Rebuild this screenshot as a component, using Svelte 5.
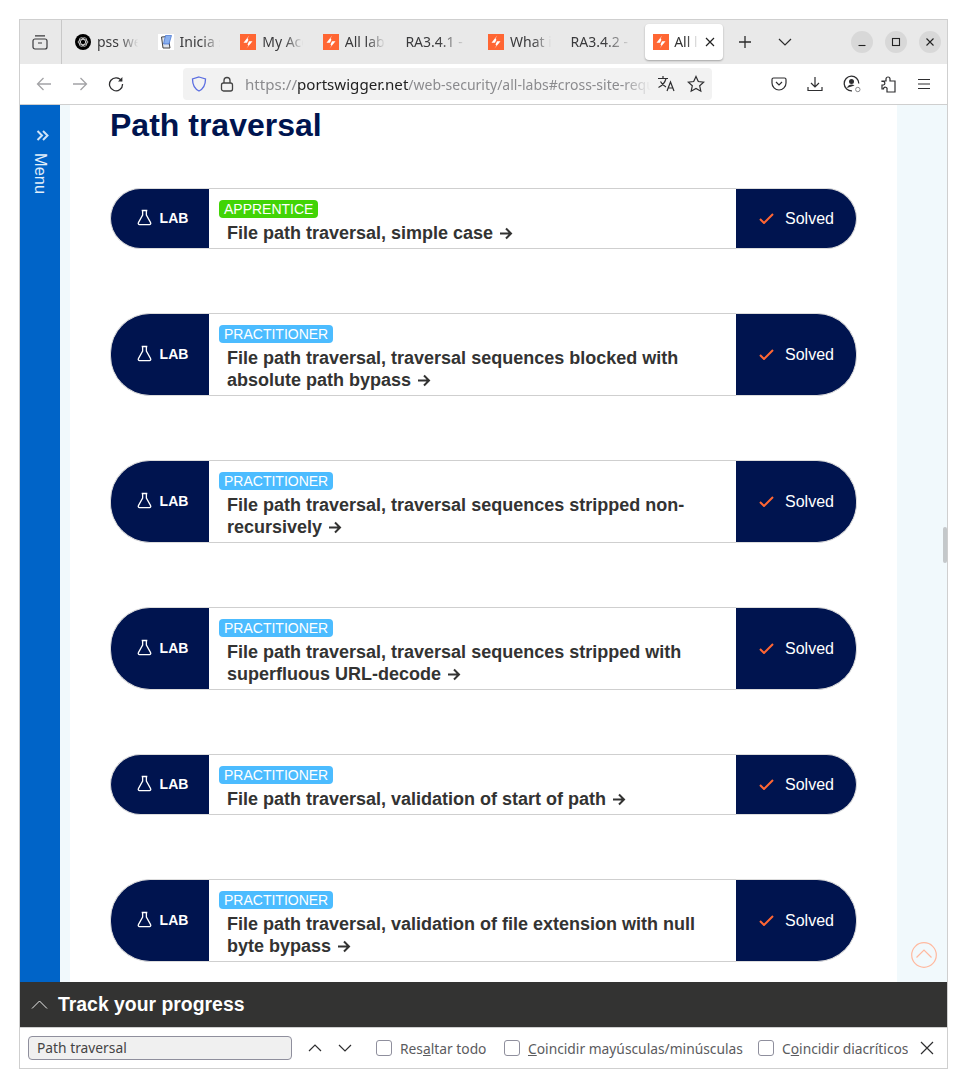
<script>
  const labs = [
    { level: 'APPRENTICE', title: 'File path traversal, simple case' },
    { level: 'PRACTITIONER', title: 'File path traversal, traversal sequences blocked with absolute path bypass' },
    { level: 'PRACTITIONER', title: 'File path traversal, traversal sequences stripped non-recursively' },
    { level: 'PRACTITIONER', title: 'File path traversal, traversal sequences stripped with superfluous URL-decode' },
    { level: 'PRACTITIONER', title: 'File path traversal, validation of start of path' },
    { level: 'PRACTITIONER', title: 'File path traversal, validation of file extension with null byte bypass' }
  ];

  const tabs = [
    { label: 'pss web', icon: 'openai' },
    { label: 'Inicia sesión', icon: 'doc' },
    { label: 'My Account', icon: 'ps' },
    { label: 'All labs', icon: 'ps' },
    { label: 'RA3.4.1 -', icon: '' },
    { label: 'What is', icon: 'ps' },
    { label: 'RA3.4.2 -', icon: '' }
  ];
</script>

{#snippet psIcon()}
  <svg class="fav" viewBox="0 0 16 16">
    <rect width="16" height="16" fill="#ff6633" />
    <path d="M9.200 1.500 3.500 8.800H7L8.400 5.800 7.600 4.600z" fill="#fff" />
    <path d="M12.500 7.200H9L7.500 10.400l.9 1.200-1.900 3z" fill="#fff" />
  </svg>
{/snippet}

<div class="window">
  <header class="tabbar">
    <div class="view-btn">
      <svg width="16" height="16" viewBox="0 0 16 16" fill="none" stroke="#3a3a3c" stroke-width="1.2">
        <rect x="1" y="5" width="14" height="10" rx="2" />
        <path d="M3 1.800h10M6 9h4" />
      </svg>
    </div>
    <div class="tabs">
      {#each tabs as tab}
        <div class="tab">
          {#if tab.icon === 'ps'}
            {@render psIcon()}
          {:else if tab.icon === 'openai'}
            <svg class="fav" viewBox="0 0 16 16">
              <circle cx="8" cy="8" r="8" fill="#000" />
              <g fill="none" stroke="#ddd" stroke-width="0.8">
                <ellipse cx="8" cy="8" rx="4.800" ry="2.500" />
                <ellipse cx="8" cy="8" rx="4.800" ry="2.500" transform="rotate(60 8 8)" />
                <ellipse cx="8" cy="8" rx="4.800" ry="2.500" transform="rotate(120 8 8)" />
              </g>
            </svg>
          {:else if tab.icon === 'doc'}
            <svg class="fav" viewBox="0 0 16 16">
              <rect width="16" height="16" fill="#fff" />
              <path d="M3.500 3 10 2.500 12 14H5z" fill="#dfe3ea" stroke="#444" stroke-width="1" />
              <path d="M7.500 1.500h6L11 10H5.500z" fill="#8ab0ee" stroke="#3f6fd0" stroke-width="0.7" />
            </svg>
          {/if}
          <span class="tab-label">{tab.label}</span>
        </div>
      {/each}
      <div class="tab active">
        {@render psIcon()}
        <span class="tab-label">All labs</span>
        <svg class="tab-close" width="10" height="10" viewBox="0 0 10 10" stroke="#222" stroke-width="1.2">
          <path d="M1 1l8 8M9 1l-8 8" />
        </svg>
      </div>
    </div>
    <svg class="new-tab" width="14" height="14" viewBox="0 0 14 14" stroke="#2b2b2b" stroke-width="1.3">
      <path d="M7 1v12M1 7h12" />
    </svg>
    <svg class="tab-list" width="14" height="8" viewBox="0 0 14 8" fill="none" stroke="#2b2b2b" stroke-width="1.2">
      <path d="M1 1l6 6 6-6" />
    </svg>
    <div class="win-btns">
      <span class="win-btn">
        <svg width="10" height="10" viewBox="0 0 10 10" stroke="#222" stroke-width="1.1"><path d="M1.500 8.500h7" /></svg>
      </span>
      <span class="win-btn">
        <svg width="10" height="10" viewBox="0 0 10 10" fill="none" stroke="#222" stroke-width="1.1"><rect x="1.500" y="1.500" width="7" height="7" /></svg>
      </span>
      <span class="win-btn">
        <svg width="10" height="10" viewBox="0 0 10 10" stroke="#222" stroke-width="1.1"><path d="M1.500 1.500l7 7M8.500 1.500l-7 7" /></svg>
      </span>
    </div>
  </header>

  <nav class="toolbar">
    <svg class="nav-icon" width="16" height="16" viewBox="0 0 16 16" fill="none" stroke="#a3a3a6" stroke-width="1.3">
      <path d="M15 8H1.500M7.500 2 1.500 8l6 6" />
    </svg>
    <svg class="nav-icon" width="16" height="16" viewBox="0 0 16 16" fill="none" stroke="#a3a3a6" stroke-width="1.3">
      <path d="M1 8h13.500M8.500 2l6 6-6 6" />
    </svg>
    <svg class="nav-icon" width="16" height="16" viewBox="0 0 16 16" fill="none" stroke="#2e2e30" stroke-width="1.3">
      <path d="M13.600 5A6.500 6.500 0 1 0 14.500 8" />
      <path d="M14.400 1v4.400H10" fill="#2e2e30" stroke="none" />
    </svg>
    <div class="urlbar">
      <svg width="16" height="16" viewBox="0 0 16 16" fill="none" stroke="#5b6ee1" stroke-width="1.3">
        <path d="M8 1 14.500 3c0 6-1.500 9.500-6.500 12C3 12.500 1.500 9 1.500 3z" />
      </svg>
      <svg class="lock" width="14" height="16" viewBox="0 0 14 16" fill="none" stroke="#444" stroke-width="1.3">
        <rect x="1.500" y="7" width="11" height="8" rx="2" />
        <path d="M4 7V4.500a3 3 0 0 1 6 0V7" />
      </svg>
      <span class="url"><span class="dim">https://</span>portswigger.net<span class="dim tail">/web-security/all-labs#cross-site-request-forgery</span></span>
      <span class="translate">
        <svg width="20" height="18" viewBox="0 0 20 18" fill="none" stroke="#2e2e30" stroke-width="1.200">
          <path d="M1 3.500h10M6 1v2.500M9 3.500c-1 4-3.500 7-7.500 9M3.500 6.500c1.500 3 3.500 4.500 5.500 5.500M10 16l3.500-9 3.500 9M11.300 13h4.500" />
        </svg>
      </span>
      <svg class="star" width="18" height="18" viewBox="0 0 18 18" fill="none" stroke="#2e2e30" stroke-width="1.200">
        <path d="M9 1.500l2.300 5 5.400.6-4 3.700 1.100 5.400L9 13.500l-4.800 2.700 1.100-5.400-4-3.700 5.400-.6z" />
      </svg>
    </div>
    <div class="tools">
      <svg width="16" height="16" viewBox="0 0 16 16" fill="none" stroke="#2e2e30" stroke-width="1.200">
        <path d="M2.500 2h11A1.500 1.500 0 0 1 15 3.500V7a7 7 0 0 1-14 0V3.500A1.500 1.500 0 0 1 2.500 2z" />
        <path d="M5 6l3 3 3-3" />
      </svg>
      <svg width="16" height="16" viewBox="0 0 16 16" fill="none" stroke="#2e2e30" stroke-width="1.200">
        <path d="M8 1v9.500M4 7l4 4 4-4M1 11v3.500h14V11" />
      </svg>
      <svg width="18" height="18" viewBox="0 0 18 18" fill="none" stroke="#2e2e30" stroke-width="1.300">
        <path d="M15.800 8.500A7.300 7.300 0 1 0 9 15.800" />
        <circle cx="8.500" cy="6.500" r="2.500" fill="#2e2e30" stroke="none" />
        <path d="M3.800 13c1-2.500 3-3.500 4.700-3.500 1.200 0 2 .3 3 1" fill="#2e2e30" stroke="none" />
        <circle cx="14.800" cy="14.500" r="2.200" stroke="#8a8a8d" stroke-width="1" />
      </svg>
      <svg width="16" height="18" viewBox="0 0 16 18" fill="none" stroke="#2e2e30" stroke-width="1.200">
        <path d="M1 6h4V4a2 2 0 0 1 4 0v2h5v11H6v-2.500a1.800 1.800 0 0 0-3.500-1V14H1v-4h1.500a1.800 1.800 0 0 0 0-3.500H1z" />
      </svg>
      <svg width="14" height="12" viewBox="0 0 14 12" stroke="#2e2e30" stroke-width="1.200">
        <path d="M1 1.500h12M1 6h12M1 10.500h12" />
      </svg>
    </div>
  </nav>

  <main class="page">
    <aside class="side">
      <svg class="side-chevron" width="13" height="11" viewBox="0 0 13 11" fill="none" stroke="#cfe3f7" stroke-width="2">
        <path d="M1.500 1l4.500 4.500L1.500 10M7 1l4.500 4.500L7 10" />
      </svg>
      <span class="side-label">Menu</span>
    </aside>
    <div class="gutter"></div>
    <section class="content">
      <h1>Path traversal</h1>
      {#each labs as lab}
        <div class="lab">
          <div class="lab-tag">
            <svg width="15" height="17" viewBox="0 0 16 17" fill="none" stroke="#fff" stroke-width="1.400">
              <path d="M5 1h6M6 1v5L1.500 14a1.300 1.300 0 0 0 1.200 2h10.600a1.300 1.300 0 0 0 1.200-2L10 6V1" />
            </svg>
            <span>LAB</span>
          </div>
          <div class="lab-body">
            <span class="level" class:apprentice={lab.level === 'APPRENTICE'}>{lab.level}</span>
            <a class="lab-title" href="#lab">{lab.title} <svg class="arrow" width="14" height="13" viewBox="0 0 14 13" fill="none" stroke="#333332" stroke-width="2"><path d="M1 6.500h11M7 1.500l5 5-5 5" /></svg></a>
          </div>
          <div class="lab-status">
            <svg width="15" height="11" viewBox="0 0 15 11" fill="none" stroke="#ff6633" stroke-width="2">
              <path d="M1 6l4 4 9-9" />
            </svg>
            <span>Solved</span>
          </div>
        </div>
      {/each}
    </section>
    <div class="right-rail">
      <div class="scroll-thumb"></div>
      <svg class="to-top" width="26" height="26" viewBox="0 0 26 26" fill="none" stroke="#ffb99f" stroke-width="1.200">
        <circle cx="13" cy="13" r="12.300" />
        <path d="M5.500 15.500 13 8l7.500 7.500" />
      </svg>
    </div>
  </main>

  <div class="track">
    <svg width="17" height="9" viewBox="0 0 17 9" fill="none" stroke="#fff" stroke-width="0.900">
      <path d="M1 8.500 8.500 1 16 8.500" />
    </svg>
    <span>Track your progress</span>
  </div>

  <footer class="findbar">
    <div class="find-input">Path traversal</div>
    <svg class="find-arrow" width="14" height="8" viewBox="0 0 14 8" fill="none" stroke="#2e2e30" stroke-width="1.200"><path d="M1 7l6-6 6 6" /></svg>
    <svg class="find-arrow" width="14" height="8" viewBox="0 0 14 8" fill="none" stroke="#2e2e30" stroke-width="1.200"><path d="M1 1l6 6 6-6" /></svg>
    <label class="check first"><span class="box"></span><span class="check-text">Res<u>a</u>ltar todo</span></label>
    <label class="check second"><span class="box"></span><span class="check-text"><u>C</u>oincidir mayúsculas/minúsculas</span></label>
    <label class="check third"><span class="box"></span><span class="check-text clip">C<u>o</u>incidir diacríticos</span></label>
    <svg class="find-close" width="14" height="14" viewBox="0 0 14 14" stroke="#2e2e30" stroke-width="1.200"><path d="M1 1l12 12M13 1 1 13" /></svg>
  </footer>
</div>

<style>
  :global(body) {
    margin: 0;
    background: #fff;
  }

  .window {
    box-sizing: border-box;
    width: 929px;
    height: 1050px;
    margin: 19px 0 0 19px;
    border: 1px solid #cfcfcf;
    display: flex;
    flex-direction: column;
    overflow: hidden;
    font-family: "Noto Sans", sans-serif;
    color: #3a3a3c;
  }

  .tabbar {
    flex: 0 0 44px;
    display: flex;
    align-items: center;
    background: #e9e9e9;
  }

  .view-btn {
    flex: 0 0 42px;
    height: 100%;
    box-sizing: border-box;
    border-right: 1px solid #c8c8c8;
    padding-right: 2px;
    display: flex;
    align-items: center;
    justify-content: center;
  }

  .tabs {
    display: flex;
    align-items: center;
    margin-left: 5px;
  }

  .tab {
    box-sizing: border-box;
    flex: 0 0 82.600px;
    height: 36px;
    padding: 0 8px;
    display: flex;
    align-items: center;
    gap: 6px;
    font-size: 14px;
    overflow: hidden;
    white-space: nowrap;
  }

  .tab-label {
    flex: 1;
    min-width: 0;
    padding-bottom: 2px;
    overflow: hidden;
    -webkit-mask-image: linear-gradient(to right, #000 50%, transparent 92%);
    mask-image: linear-gradient(to right, #000 50%, transparent 92%);
  }

  .tab.active {
    flex: 0 0 78px;
    background: #fff;
    border-radius: 4px;
    box-shadow: 0 1px 2px rgba(0, 0, 0, 0.3);
    color: #333;
    gap: 5px;
  }

  .tab-close {
    flex: none;
  }

  .fav {
    flex: none;
    width: 16px;
    height: 16px;
  }

  .new-tab {
    margin-left: 15px;
  }

  .tab-list {
    margin-left: 26px;
  }

  .win-btns {
    margin-left: auto;
    margin-right: 6px;
    display: flex;
    gap: 12px;
  }

  .win-btn {
    width: 22px;
    height: 22px;
    border-radius: 50%;
    background: #d8d8d8;
    display: flex;
    align-items: center;
    justify-content: center;
  }

  .toolbar {
    flex: 0 0 41px;
    box-sizing: border-box;
    border-bottom: 1px solid #cfcfcf;
    background: #fff;
    display: flex;
    align-items: center;
    padding-left: 16px;
  }

  .nav-icon {
    flex: none;
    margin-right: 20px;
  }

  .urlbar {
    flex: none;
    box-sizing: border-box;
    width: 529px;
    height: 32px;
    margin-left: 39px;
    padding: 0 7px 0 8px;
    border-radius: 4px;
    background: #f2f2f2;
    display: flex;
    align-items: center;
    font-size: 15.100px;
    color: #222;
  }

  .lock {
    margin-left: 13px;
    flex: none;
  }

  .urlbar > svg:first-child {
    flex: none;
  }

  .url {
    flex: 1;
    min-width: 0;
    margin-left: 11px;
    white-space: nowrap;
    overflow: hidden;
    -webkit-mask-image: linear-gradient(to right, #000 93%, transparent 100%);
    mask-image: linear-gradient(to right, #000 93%, transparent 100%);
  }

  .dim {
    color: #8b8b8e;
  }

  .tail {
    font-size: 14px;
  }

  .translate {
    display: flex;
    margin-left: 6px;
  }

  .star {
    margin-left: 10px;
    flex: none;
  }

  .tools {
    margin-left: 59px;
    display: flex;
    align-items: center;
    gap: 20px;
  }

  .page {
    flex: 1;
    min-height: 0;
    display: flex;
    background: #fff;
    overflow: hidden;
  }

  .side {
    flex: 0 0 40px;
    background: #0064c8;
    display: flex;
    flex-direction: column;
    align-items: center;
    padding-top: 25px;
    box-sizing: border-box;
    color: #e3effa;
  }

  .side-chevron {
    margin-left: 4px;
  }

  .side-label {
    margin-top: 12px;
    writing-mode: vertical-rl;
    font-family: "Liberation Sans", sans-serif;
    font-size: 16.400px;
  }

  .gutter {
    flex: 0 0 10px;
    background: #f1f9fc;
  }

  .content {
    flex: 0 0 827px;
    box-sizing: border-box;
    padding: 0 40px;
    font-family: "Liberation Sans", sans-serif;
  }

  h1 {
    margin: 1px 0 44px;
    font-size: 32px;
    line-height: 38px;
    font-weight: 700;
    color: #00144f;
  }

  .lab {
    display: flex;
    margin-bottom: 64px;
  }

  .lab-tag {
    flex: 0 0 99px;
    box-sizing: border-box;
    background: #00144f;
    border: 1px solid #dcdcdc;
    border-right: 0;
    border-radius: 40px 0 0 40px;
    display: flex;
    align-items: center;
    justify-content: center;
    gap: 8px;
    padding: 0 0 2px 5px;
    color: #fff;
    font-size: 14px;
    font-weight: 700;
  }

  .lab-body {
    flex: 1;
    box-sizing: border-box;
    border-top: 1px solid #cfcfcf;
    border-bottom: 1px solid #cfcfcf;
    padding: 11px 30px 4px 10px;
  }

  .level {
    display: table;
    padding: 0 5px;
    border-radius: 4px;
    background: #4cbcff;
    color: #fff;
    font-size: 14px;
    line-height: 18px;
  }

  .level.apprentice {
    background: #41d406;
  }

  .lab-title {
    display: block;
    margin: 4px 0 0 8px;
    color: #333332;
    text-decoration: none;
    font-size: 18px;
    font-weight: 700;
    line-height: 22px;
  }

  .arrow {
    margin-left: 1px;
    vertical-align: -1px;
  }

  .lab-status {
    flex: 0 0 121px;
    box-sizing: border-box;
    background: #00144f;
    border: 1px solid #dcdcdc;
    border-left: 0;
    border-radius: 0 40px 40px 0;
    display: flex;
    align-items: center;
    gap: 11px;
    padding-left: 23px;
    color: #fff;
    font-size: 16px;
  }

  .right-rail {
    flex: 1;
    position: relative;
    background: #f1f9fc;
  }

  .scroll-thumb {
    position: absolute;
    right: 0;
    top: 422px;
    width: 4px;
    height: 36px;
    background: #c4c8ca;
    border-radius: 2px;
  }

  .to-top {
    position: absolute;
    left: 14px;
    top: 837px;
  }

  .track {
    flex: 0 0 45px;
    box-sizing: border-box;
    background: #333332;
    display: flex;
    align-items: center;
    gap: 10px;
    padding-left: 11px;
    color: #fff;
    font-family: "Liberation Sans", sans-serif;
    font-size: 19.400px;
    font-weight: 700;
  }

  .findbar {
    flex: 0 0 41px;
    box-sizing: border-box;
    border-top: 1px solid #cfcfcf;
    background: #fff;
    display: flex;
    align-items: center;
    padding-left: 8px;
    font-size: 13.800px;
    color: #5b5b5e;
  }

  .find-input {
    flex: none;
    box-sizing: border-box;
    width: 264px;
    height: 24px;
    padding-left: 8px;
    border: 1px solid #8f8f9d;
    border-radius: 4px;
    background: #f0f0f0;
    line-height: 22px;
    color: #444;
  }

  .find-arrow {
    flex: none;
    margin-left: 16px;
  }

  .check {
    flex: none;
    display: flex;
    align-items: center;
    gap: 8px;
    white-space: nowrap;
  }

  .check.first {
    margin-left: 24px;
    width: 128px;
  }

  .check.second {
    width: 254px;
  }

  .box {
    flex: none;
    box-sizing: border-box;
    width: 16px;
    height: 16px;
    border: 1px solid #8f8f9d;
    border-radius: 3px;
    background: #fff;
  }

  .clip {
    width: 126px;
    overflow: hidden;
  }

  .find-close {
    flex: none;
    margin-left: 12px;
  }
</style>
